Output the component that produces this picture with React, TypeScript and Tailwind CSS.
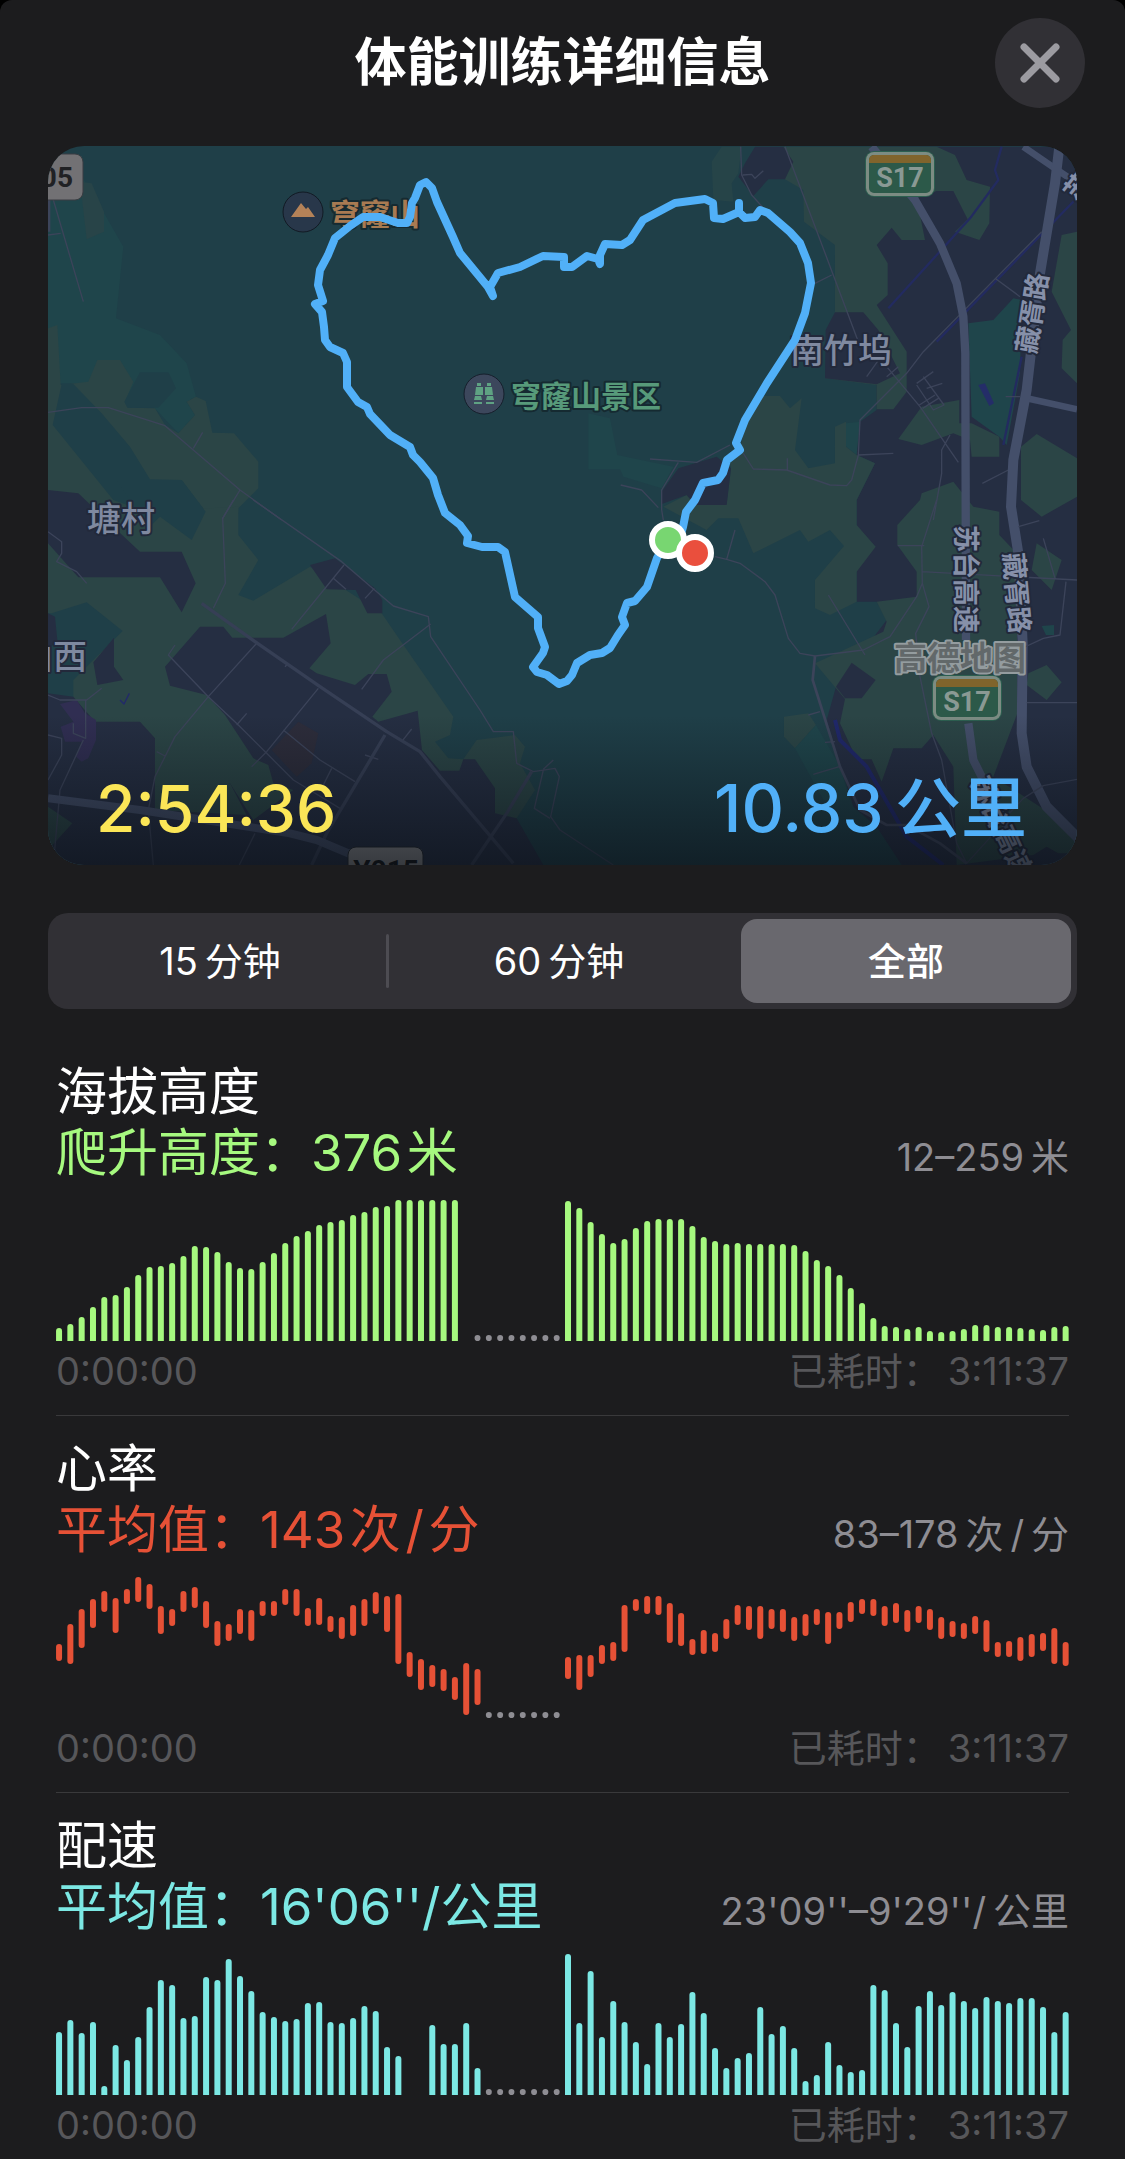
import { useState } from "react";

const SLOTS = 90;
const STEP = 11.3;
const CHART_HEIGHT = 141;

type Bar = [number, number] | null;

interface Metric {
  id: string;
  title: string;
  summary: string;
  range: string;
  textClass: string;
  barClass: string;
  bars: Bar[];
  dotsFrom: number;
}

const fromBase = (heights: number[]): Bar[] =>
  heights.map((h) => (h ? [CHART_HEIGHT - h, CHART_HEIGHT + 4] : null));

const pause = (count: number): Bar[] => Array.from({ length: count }, () => null);

const elevation: Bar[] = [
  ...fromBase([
    13, 17, 24, 34, 44, 46, 54, 66, 74, 75, 78, 85, 95, 94, 89, 79, 73, 72, 79, 88, 98, 105, 110, 116, 119, 121, 126,
    129, 134, 135, 141, 141, 141, 141, 141, 141,
  ]),
  ...pause(9),
  ...fromBase([
    140, 133, 119, 107, 98, 102, 113, 120, 122, 122, 122, 115, 104, 100, 97, 98, 97, 97, 97, 97, 96, 90, 81, 75, 66,
    53, 38, 23, 15, 14, 12, 14, 10, 9, 10, 12, 16, 16, 14, 14, 13, 12, 11, 14, 15,
  ]),
];

const heartRate: Bar[] = [
  [67, 84], [47, 87], [32, 71], [22, 51], [14, 35], [21, 56], [12, 27], [0, 25], [7, 32], [29, 57],
  [32, 49], [14, 35], [10, 31], [24, 51], [44, 69], [47, 64], [32, 57], [33, 64], [24, 39], [24, 39],
  [12, 28], [12, 39], [31, 49], [21, 48], [39, 55], [40, 62], [28, 59], [22, 49], [15, 37], [19, 55],
  [17, 87], [75, 100], [82, 113], [88, 110], [92, 114], [100, 123], [86, 138], [92, 128],
  ...pause(7),
  [80, 102], [78, 113], [78, 100], [68, 87], [65, 84], [28, 75], [22, 34], [19, 37], [19, 38], [26, 66],
  [36, 69], [62, 78], [53, 77], [56, 75], [42, 62], [28, 48], [29, 53], [29, 62], [32, 52], [32, 55],
  [40, 64], [37, 59], [32, 48], [35, 67], [35, 52], [25, 45], [22, 37], [22, 39], [29, 49], [26, 46],
  [33, 55], [29, 46], [32, 53], [40, 62], [44, 60], [46, 62], [39, 57], [43, 75], [65, 80], [64, 80],
  [60, 84], [57, 80], [56, 74], [51, 87], [65, 89],
];

const pace: Bar[] = [
  ...fromBase([
    63, 75, 62, 73, 9, 50, 35, 58, 88, 115, 110, 77, 79, 118, 115, 136, 119, 104, 83, 78, 74, 76, 92, 93, 73, 72, 77,
    89, 84, 48, 39, 0, 0, 70, 51, 51, 72, 27,
  ]),
  ...pause(7),
  ...fromBase([
    141, 72, 124, 58, 94, 73, 53, 31, 72, 58, 71, 103, 82, 47, 27, 37, 42, 88, 61, 69, 47, 14, 20, 53, 30, 23, 25,
    110, 105, 72, 48, 89, 104, 90, 103, 94, 87, 98, 94, 92, 97, 97, 88, 63, 83,
  ]),
];

// \u2009 and \u200a are the thin and hair spaces between numbers and units
const metrics: Metric[] = [
  {
    id: "elevation",
    title: "海拔高度",
    summary: "爬升高度：376\u200a米",
    range: "12–259\u2009米",
    textClass: "text-[#a6f97f]",
    barClass: "fill-[#a6f97f]",
    bars: elevation,
    dotsFrom: 37,
  },
  {
    id: "heart",
    title: "心率",
    summary: "平均值：143\u200a次\u200a/\u200a分",
    range: "83–178\u2009次\u2009/\u2009分",
    textClass: "text-[#e65136]",
    barClass: "fill-[#e65136]",
    bars: heartRate,
    dotsFrom: 38,
  },
  {
    id: "pace",
    title: "配速",
    summary: "平均值：16'06''/公里",
    range: "23'09''–9'29''/\u2009公里",
    textClass: "text-[#7ce8e4]",
    barClass: "fill-[#7ce8e4]",
    bars: pace,
    dotsFrom: 38,
  },
];

const ranges = ["15\u2009分钟", "60\u2009分钟", "全部"];

const ROUTE =
  "M668 540 L657 558 L647 587 L635 601 L627 603 L622 617 L625 625 L618 635 L610 648 L602 653 L590 655 L577 663 L572 675 L567 681 L559 684 L547 675 L537 672 L533 667 L543 653 L545 647 L538 628 L538 617 L515 597 L505 552 L498 547 L482 547 L467 543 L468 536 L460 525 L445 513 L438 495 L433 478 L420 462 L413 455 L410 447 L390 435 L370 414 L367 407 L358 402 L347 387 L347 362 L343 353 L330 347 L325 340 L324 327 L322 312 L315 304 L323 301 L318 285 L320 270 L328 255 L335 238 L350 226 L363 217 L380 217 L398 223 L407 223 L410 217 L412 203 L415 198 L420 185 L426 182 L432 188 L437 202 L453 237 L460 253 L488 287 L493 296 L490 287 L498 273 L520 267 L543 256 L564 257 L564 267 L572 267 L587 256 L598 259 L600 264 L600 255 L605 244 L622 245 L630 240 L643 220 L675 203 L705 199 L713 203 L714 218 L723 219 L739 212 L739 203 L739 212 L745 218 L755 217 L760 210 L768 213 L790 232 L800 243 L808 263 L811 283 L805 313 L795 340 L767 383 L745 420 L736 443 L740 450 L727 460 L723 473 L718 480 L703 483 L695 500 L686 512 L683 527 L678 545";

function RoadBadge({ x, y }: { x: number; y: number }) {
  return (
    <g transform={`translate(${x} ${y})`}>
      <rect x="-1" y="-1" width="70" height="46" rx="9" fill="#2c5f50" />
      <rect width="68" height="44" rx="8" fill="#7c8c83" />
      <rect x="3" y="3" width="62" height="38" rx="5" fill="#2c5949" />
      <path d="M3 11V8a5 5 0 0 1 5-5h52a5 5 0 0 1 5 5v3z" fill="#80642c" />
      <text x="34" y="35" textAnchor="middle" fontSize="27" fontWeight="700" fill="#8a9994">
        S17
      </text>
    </g>
  );
}

// Each tile is drawn at three units per map unit
function Terrain() {
  return (
    <g>
      <g transform="translate(40 140) scale(.33333)">
        <path fill="#1f454b" d="M24 180 120 100 190 215 250 320 228 535 360 585 440 670 468 770 440 785 465 825 415 880 340 800 110 730 24 730z" />
        <path fill="#284448" d="M120 125 155 130 192 215 192 275 140 298z" />
        <path fill="#2b4546" d="M24 565 52 555 62 735 145 725 172 660 240 660 280 725 255 785 265 803 345 805 375 855 415 880 465 825 440 785 468 770 497 783 517 878 582 880 655 965 655 1045 595 1105 590 1200 24 1200z" />
        <path fill="#1f3f48" d="M300 697H385L408 745 355 803H262L253 785z" />
        <path fill="#1f3f48" d="M65 732H100L185 820 270 920 330 1018 425 1020 497 1115 455 1200 360 1130 220 1080 38 855z" />
      </g>

      <g transform="translate(40 500) scale(.33333)">
        <path fill="#2b4546" d="M24 50 595 20 595 105 655 180 595 285 640 302 810 200 1025 340 1080 420 1240 650 1230 705 1185 725 1225 775 1270 778 1310 720 1425 705 1455 740 1440 790 1485 870 1430 955 1100 1095 24 1095z" />
        <path fill="#1f3f48" d="M230 -60 425 -60 497 35 455 120 360 50 325 85z" />
        <path fill="#252e42" d="M24 -30 115 -20 220 80 300 155 425 155 467 250 425 337 360 232 115 232 24 130z" />
        <path fill="#252e42" d="M810 195 885 175 1005 265 1027 300V340H982L947 270 860 268z" />
        <path fill="#1f3f48" d="M35 340 140 307 248 393 160 480 100 540V600L24 590V340z" />
        <path fill="#252e42" d="M222 413V500L250 540 172 555 160 487zM24 340 45 350 52 420 24 450z" />
        <path fill="#252e42" d="M480 380H550L577 413H730L858 342 872 430 808 505 830 520 945 555 985 522H1040L1055 575 997 650 1015 665 1133 632 1146 750 1200 812H1258L1270 778H1305L1365 865V940L1430 955 1510 1095H24V580L100 590 165 665H300L345 715V920L570 850 640 960 760 870 700 850 685 795 640 775 555 645 500 585 390 557 375 500z" />
        <path fill="#2b4546" d="M24 920 97 970 24 1050zM345 860 570 850 620 945 345 930z" />
        <path fill="#302e52" d="M60 612 110 600 135 640 168 660V720L145 775 125 785 108 770 125 725H75L62 680 100 665z" />
        <path fill="#2d2d3b" d="M775 665 835 700 815 790 770 830 695 750z" />
      </g>

      <g transform="translate(400 140) scale(.33333)">
        <path fill="#264448" d="M935 65 965 20H1025L1015 100 995 130 1000 185 940 180z" />
        <path fill="#1f454b" d="M565 820 630 835 652 945 820 980 785 1045 670 1010 660 988H565z" />
      </g>

      <g transform="translate(740 140) scale(.33333)">
        <path fill="#252e42" d="M410 20V810L360 845 318 920 350 945 405 970 350 1080V1385H410L440 1440 288 1640 260 1740 340 2000 410 2060 485 2175H1011V20z" />
        <path fill="#2b4546" d="M130 20H590L645 45 680 120 750 140 748 250 718 300 645 275 683 238 640 153H590L530 175 555 300H485L455 263 410 315 443 370V465L410 495 500 635V755L460 808H410V735L255 715 285 515V315L192 245 190 150 135 118z" />
        <path fill="#252e42" d="M45 20H130L160 65 135 118H85L40 168 -5 110 15 70zM285 517H370L415 570 480 700 410 733 255 715 257 570z" />
        <path fill="#2b4546" d="M965 285 1011 275V730L965 685 968 600 993 570 935 455zM890 882 1011 955V1070L905 1130 843 1080V920z" />
        <path fill="#2b4546" d="M545 800 658 780V850H695L778 890V950H695L690 900 640 880 545 915 475 897z" />
        <path fill="#1f454b" d="M685 550 760 540 820 475 845 480 840 700 800 915 778 890 695 830zM318 850 360 845 350 945 318 920z" />
        <path fill="#242d68" d="M715 735 735 730 762 790 748 798z" />
      </g>

      <g transform="translate(740 500) scale(.33333)">
        <path fill="#2b4546" d="M60 -312H120L150 -275 185 -305 165 -150 205 -95 285 -110V-220L318 -235V-160L350 -135 405 -110 350 0V75L407 140 350 215V305L270 345 225 325V240L312 138 270 90 205 125 180 90 40 160 -5 55H-65L-100 90 -230 20 -160 -15 -135 12H-40L-27 -95 -35 -140 0 -150 15 -220z" />
        <path fill="#252e42" d="M-185 -95 -70 -130 -27 -95 -40 15H-135L-160 -15 -235 12V-25z" />
        <path fill="#2b4546" d="M410 305 530 290V215L472 135V75L540 0 545 -20 640 -55 700 20 778 35V105L830 160 832 640 760 830 900 920 1011 990V1060H955L920 1040 880 1065 650 1095 640 800 580 705 545 745H460L425 845 395 778H350L300 670 315 597 225 490 430 395 440 365z" />
        <path fill="#252e42" d="M335 488 407 540 365 595H315L288 560z" />
        <path fill="#2b4546" d="M890 130 965 180 935 270 875 210zM865 520 920 495 965 547 920 600 860 555zM132 650 205 640 228 675 165 745 132 710z" />
        <path fill="#1f454b" d="M165 745 228 675 300 800 330 900 250 900zM905 378 942 375V405H918z" />
      </g>
    </g>
  );
}

function Roads() {
  return (
    <g fill="none" stroke="#3c445a" strokeWidth="4" strokeLinejoin="round">
      <g transform="translate(40 140) scale(.33333)">
        <path d="M40 180 130 485M24 285 62 280M24 817 125 803H205L375 857 600 1050 725 1140M488 877 460 925M600 1050 548 1135" />
        <path d="M26 180V275" strokeWidth="10" />
      </g>
      <g transform="translate(40 500) scale(.33333)">
        <path d="M24 95 65 125V160L50 185 110 215 140 250M580 0 548 55 556 250 520 325M640 0 905 185 1060 318 1165 350 1172 410 1320 630 1360 695H1420L1430 790 1480 815 1545 805 1558 830 1532 950 1560 990 1720 1095M1510 810 1483 925 1530 955M1540 780 1510 808" />
        <path d="M912 195 755 388M880 235 918 268M1003 265 975 295M1172 372 1030 480 965 568M650 430 505 590 405 710 345 830 325 930 340 1095M405 435 385 465 505 590 595 675 680 760 760 840 900 925M835 565 680 755 635 800M730 690 840 780 945 845M875 805 850 855M590 675 620 640M735 500 745 490M1085 725 1115 687M975 765 1015 778M350 755 375 768M645 1000 598 1095" />
        <path d="M24 585 60 600H140L185 565M137 600V715L100 700V670M130 720 60 870 40 1095M24 705 65 715V765L24 840" />
        <path d="M485 310 645 425 840 560 1040 695 1140 755 1200 830 1420 1090M1035 705 860 1000 815 1095M1475 815 1400 940 1295 1095" strokeWidth="10" stroke="#363f55" />
        <path d="M24 895 300 930 750 1000 830 1020 930 1062" strokeWidth="24" stroke="#414c66" />
        <path d="M240 600 252 612 268 580" stroke="#22296b" />
      </g>
      <g transform="translate(400 140) scale(.33333)">
        <path d="M1022 20 1025 105 1055 165 1100 215M1028 105 1055 103 1065 115 1090 92M750 957 890 967 990 915M835 967 785 1050V1110L790 1140M662 1035 725 1050 775 1103" />
      </g>
      <g transform="translate(740 140) scale(.33333)">
        <path d="M785 20 765 90 775 120 690 235 445 505M1005 180 590 605M845 650 790 915" stroke="#232b60" strokeWidth="7" />
        <path d="M135 20 355 605M225 430 275 405M440 680 540 800 655 967M380 710 430 640M905 275 550 635 500 700 360 840 355 945 335 1020 320 1037 270 1035 140 990 40 987 10 940M460 940 355 945M630 885 605 930V1000L580 1140M765 415 840 470M805 990 727 1030M797 770H840M142 990V955" />
        <path d="M530 730 580 695M530 735 580 810 612 795 550 710M560 745 607 730M538 795 585 765M548 805 595 775M440 710 475 680" />
        <path d="M850 20 930 75 1011 130M860 775 1011 808" stroke="#444f6a" strokeWidth="20" />
        <path d="M395 20 525 180 600 310 650 430 670 530 676 640 678 1500M685 1750 700 1860 760 1980 830 2120" stroke="#444f6a" strokeWidth="25" />
        <path d="M958 20 945 130 900 400 860 750 820 960 813 1100 835 1240 848 1510 845 1780 860 1880 920 2000 1015 2095" stroke="#444f6a" strokeWidth="30" />
      </g>
      <g transform="translate(740 500) scale(.33333)">
        <path d="M285 660 300 720 380 800 420 870 500 1010 610 1095" stroke="#20286a" strokeWidth="12" />
        <path d="M590 0 545 140 547 250 530 290 450 410 370 450 225 468 180 460 145 415 105 285 75 245 0 190 -40 178 -75 170M-40 178 -15 90M547 250 567 320 527 400 540 530 575 700 605 780 650 1030 680 1090 780 980M545 215 1011 240M473 137H553M265 285 375 465M835 80 898 62M910 115 945 235M978 245 960 405 910 415 835 450M860 608H1011M1011 838 910 857 850 895 790 960M205 645 240 635M220 823 298 800M255 727 285 725" />
        <path d="M225 468 218 540 300 800 360 930 440 975H500L600 1030 680 1090" strokeWidth="8" />
      </g>
    </g>
  );
}

function Labels() {
  return (
    <g fontWeight="600">
      <g stroke="#22293b" strokeWidth="4" strokeLinejoin="round" className="[paint-order:stroke]" fill="#8690a9">
        <g fontSize="34" fontWeight="500" fill="#7f89a0">
          <text x="790" y="363">南竹坞</text>
          <text x="87" y="531">塘村</text>
          <text x="87" y="669" textAnchor="end">山西</text>
        </g>
        <g fontSize="27" textAnchor="middle">
          <text transform="rotate(-81 1032 313)" x="1032" y="323">藏胥路</text>
          <text transform="rotate(90 966 579)" x="966" y="589">苏台高速</text>
          <text transform="rotate(85 1017 593)" x="1017" y="603">藏胥路</text>
          <text transform="rotate(65 1002 827)" x="1002" y="837" fill="#7b859c">苏台高速</text>
          <text transform="rotate(-52 1078 187)" x="1078" y="197">苏</text>
        </g>
        <g stroke="#152a31">
          <text x="330" y="225" fontSize="30" fill="#a87a52">穹窿山</text>
          <text x="511" y="407" fontSize="30" fill="#579a7a">穹窿山景区</text>
        </g>
      </g>

      <circle cx="303" cy="212" r="20" fill="#28374a" stroke="#121a24" />
      <path d="M291 217 301 203 306 209 308 207 315 217z" fill="#b48258" />
      <circle cx="484" cy="394" r="20" fill="#3c475c" stroke="#161f2c" />
      <path
        d="M477 383h4v3h-4zM487 383h4v3h-4zM476 387h7v8h-8zM485 387h7l1 8h-8zM475 396h6l1 4h-8zM487 396h6l1 4h-8zM474 402h8v2h-8zM486 402h8v2h-8z"
        fill="#5fa283"
      />

      <rect x="20" y="154" width="63" height="46" rx="8" fill="#727174" stroke="#3a3d42" />
      <text x="73" y="187" textAnchor="end" fontSize="28" fontWeight="700" fill="#202124">05</text>
      <rect x="348" y="847" width="75" height="46" rx="8" fill="#8a8a8c" stroke="#22262c" />
      <text x="386" y="880" textAnchor="middle" fontSize="28" fontWeight="700" fill="#111214">Y015</text>
      <RoadBadge x={866} y={152} />
      <RoadBadge x={933} y={676} />
      <text
        x="894"
        y="670"
        fontSize="33"
        fill="#62686a"
        stroke="#949c9f"
        strokeWidth="4"
        strokeLinejoin="round"
        className="[paint-order:stroke]"
      >
        高德地图
      </text>
    </g>
  );
}

function RouteMap() {
  return (
    <div className="relative overflow-hidden rounded-[36px] bg-[#1f3f48]">
      <svg
        viewBox="48 146 1029 719"
        className="block w-full font-[family-name:Roboto,'Noto_Sans_CJK_SC',sans-serif]"
        role="img"
        aria-label="路线地图"
      >
        <defs>
          <linearGradient id="fade" x1="0" y1="0" x2="0" y2="1">
            <stop offset="0" stopColor="#0a0f16" stopOpacity="0" />
            <stop offset="1" stopColor="#0a0f16" stopOpacity=".65" />
          </linearGradient>
        </defs>
        <Terrain />
        <Roads />
        <Labels />
        <rect x="48" y="715" width="1029" height="150" fill="url(#fade)" />
        <path d={ROUTE} fill="none" stroke="#51b0f8" strokeWidth="8" strokeLinejoin="round" strokeLinecap="round" />
        <circle cx="668" cy="540" r="16" fill="#78d671" stroke="#fff" strokeWidth="6" />
        <circle cx="695" cy="553" r="16" fill="#ea4f3d" stroke="#fff" strokeWidth="6" />
      </svg>
      <div className="absolute inset-x-0 bottom-0 flex items-baseline justify-between pr-[50px] pb-[14px] pl-12 leading-[84px] font-medium">
        <span className="text-[64px] text-[#fbe657]">2:54:36</span>
        <span className="text-[66px] text-[#51b0f8]">10.83{"\u2009"}公里</span>
      </div>
    </div>
  );
}

function MetricChart({ metric }: { metric: Metric }) {
  const dots = Array.from({ length: 45 - metric.dotsFrom }, (_, i) => metric.dotsFrom + i);

  return (
    <svg viewBox="0 0 1012 141" className="mt-[17px] block w-full overflow-hidden" role="img" aria-label={metric.title}>
      {metric.bars.slice(0, SLOTS).map((bar, i) =>
        bar ? (
          <rect
            key={i}
            x={i * STEP}
            y={bar[0]}
            width="6"
            height={bar[1] - bar[0]}
            rx="3"
            className={metric.barClass}
          />
        ) : null
      )}
      {dots.map((i) => (
        <circle key={i} cx={i * STEP + 3} cy="138" r="3" fill="#8e8d93" />
      ))}
    </svg>
  );
}

function MetricSection({ metric }: { metric: Metric }) {
  return (
    <section className="border-b border-[#39393b] pt-[22px] pb-[19px] last:border-b-0 last:pb-0">
      <h2 className="text-[51px] leading-[61px] font-normal text-white">{metric.title}</h2>
      <div className="flex h-[61px] items-baseline justify-between leading-[61px]">
        <p className={`text-[51px] ${metric.textClass}`}>{metric.summary}</p>
        <p className="text-[38px] text-[#8e8d93]">{metric.range}</p>
      </div>
      <MetricChart metric={metric} />
      <div className="mt-[5px] flex justify-between text-[38px] leading-[50px] text-[#57575a]">
        <span>0:00:00</span>
        <span>已耗时：{"\u2009"}3:11:37</span>
      </div>
    </section>
  );
}

export default function App() {
  const [selected, setSelected] = useState(2);

  return (
    <div className="min-h-screen bg-black font-[family-name:Inter,'Noto_Sans_CJK_SC',sans-serif]">
      <div className="min-h-screen rounded-t-xl bg-[#1c1c1e] px-12">
        <header className="grid grid-cols-[90px_1fr_90px] items-center pt-[18px] pb-[38px]">
          <h1 className="col-start-2 text-center text-[52px] leading-[60px] font-bold text-white">
            体能训练详细信息
          </h1>
          <button
            type="button"
            aria-label="关闭"
            className="-mr-2 flex size-[90px] items-center justify-center justify-self-end rounded-full bg-[#313035]"
          >
            <svg viewBox="0 0 40 40" className="size-10" fill="none" stroke="#9c9ba1" strokeWidth="7" strokeLinecap="round">
              <path d="M4 4 36 36M36 4 4 36" />
            </svg>
          </button>
        </header>

        <RouteMap />

        <div className="mt-12 grid h-24 grid-cols-[335fr_340fr_342fr] rounded-[20px] bg-[#313035] p-[6px]">
          {ranges.map((label, i) => (
            <button
              key={label}
              type="button"
              aria-pressed={selected === i}
              onClick={() => setSelected(i)}
              className={`flex items-center text-[38px] text-white ${i === 2 ? "ml-3" : ""} ${
                selected === i ? "rounded-[16px] bg-[#69686e] font-medium" : "font-normal"
              }`}
            >
              <span className="flex-1">{label}</span>
              {selected !== i && i === 0 && <span className="h-[54px] w-[3px] rounded-full bg-[#4d4c52]" />}
            </button>
          ))}
        </div>

        <main className="mx-2 mt-[30px]">
          {metrics.map((metric) => (
            <MetricSection key={metric.id} metric={metric} />
          ))}
        </main>
      </div>
    </div>
  );
}
